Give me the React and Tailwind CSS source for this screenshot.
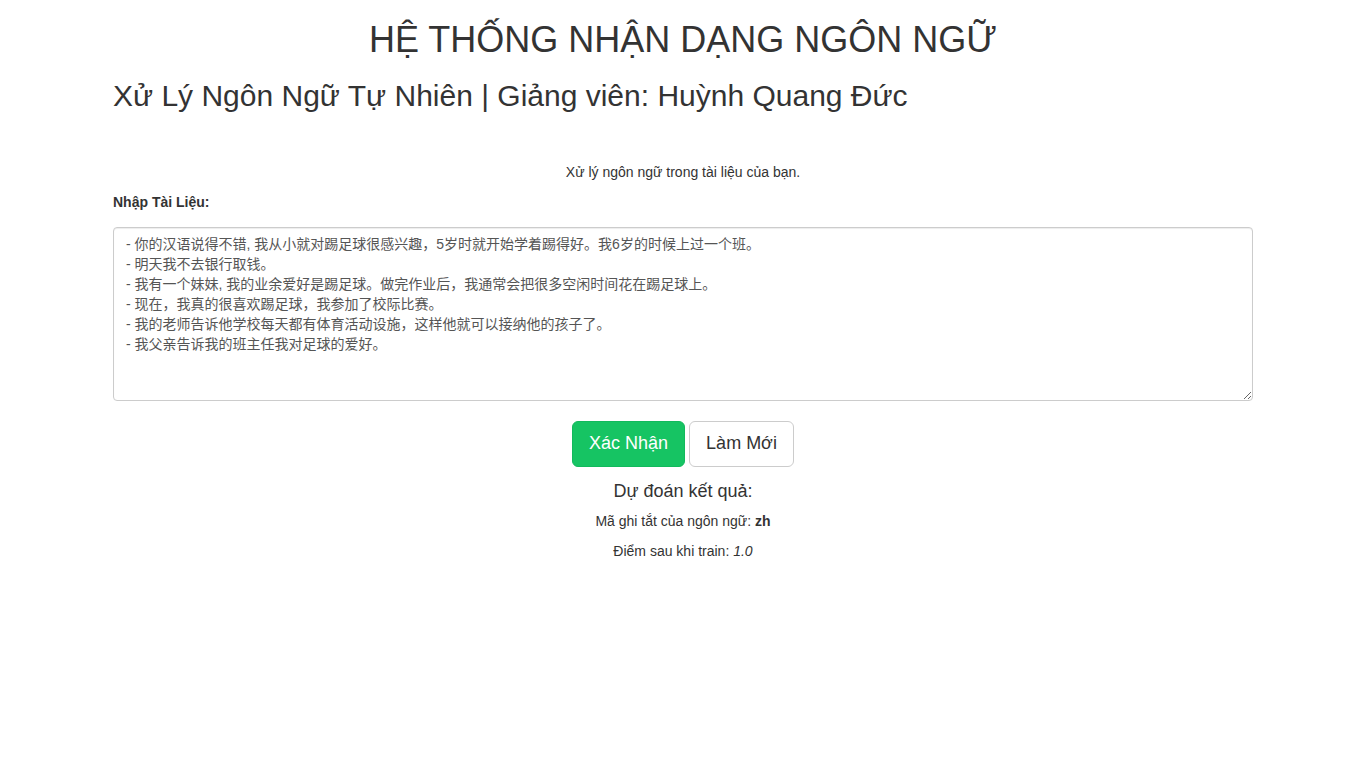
export default function App() {
  const text = `- 你的汉语说得不错, 我从小就对踢足球很感兴趣，5岁时就开始学着踢得好。我6岁的时候上过一个班。
- 明天我不去银行取钱。
- 我有一个妹妹, 我的业余爱好是踢足球。做完作业后，我通常会把很多空闲时间花在踢足球上。
- 现在，我真的很喜欢踢足球，我参加了校际比赛。
- 我的老师告诉他学校每天都有体育活动设施，这样他就可以接纳他的孩子了。
- 我父亲告诉我的班主任我对足球的爱好。`;
  const font = { fontFamily: '"Liberation Sans", Arial, "Noto Sans CJK SC", sans-serif' };
  return (
    <div className="min-h-[768px] bg-white text-[#333333] text-[14px] leading-[20px]" style={font}>
      <div className="w-[1170px] mx-auto px-[15px]">
        <h1 className="mt-[20px] mb-[10px] text-center text-[36px] leading-[1.1] font-normal">HỆ THỐNG NHẬN DẠNG NGÔN NGỮ</h1>
        <h2 className="mt-[19px] mb-[10px] text-[30px] leading-[1.1] font-normal">Xử Lý Ngôn Ngữ Tự Nhiên | Giảng viên: Huỳnh Quang Đức</h2>
        <p className="mt-[50px] mb-[10px] text-center">Xử lý ngôn ngữ trong tài liệu của bạn.</p>
        <label className="block font-bold mb-[15px]">Nhập Tài Liệu:</label>
        <textarea
          className="block w-full h-[174px] border border-[#cccccc] rounded-[4px] px-[12px] py-[6px] text-[14px] leading-[20px] text-[#555555] shadow-[inset_0_1px_1px_rgba(0,0,0,0.075)] resize-y outline-none"
          style={font}
          defaultValue={text}
        />
        <div className="mt-[20px] flex justify-center gap-[4px]">
          <button className="h-[46px] px-[16px] pt-px rounded-[6px] bg-[#16c463] border border-[#12b95c] text-white text-[18px] leading-[1.3333]">Xác Nhận</button>
          <button className="h-[46px] px-[16px] pt-px rounded-[6px] bg-white border border-[#cccccc] text-[#333333] text-[18px] leading-[1.3333]">Làm Mới</button>
        </div>
        <div className="mt-[11px] text-center">
          <div className="text-[18px] leading-[26px] mb-[7px]">Dự đoán kết quả:</div>
          <p className="mb-[10px]">Mã ghi tắt của ngôn ngữ: <b>zh</b></p>
          <p className="mb-[10px]">Điểm sau khi train: <i>1.0</i></p>
        </div>
      </div>
    </div>
  );
}
